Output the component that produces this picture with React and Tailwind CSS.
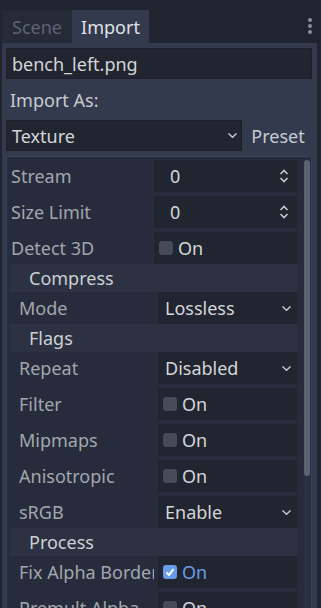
import { Fragment } from "react";

const FIELD = "bg-[#21252f] h-[32px] flex items-center relative";

function SpinArrows() {
  return (
    <svg width="10" height="16" viewBox="0 0 10 16" className="absolute right-[8px]">
      <path d="M1.5 6 L5 2.5 L8.5 6" fill="none" stroke="#c4c7cd" strokeWidth="1.6" />
      <path d="M1.5 10 L5 13.5 L8.5 10" fill="none" stroke="#c4c7cd" strokeWidth="1.6" />
    </svg>
  );
}

function Chevron({ right = "right-[5px]" }) {
  return (
    <svg width="11" height="7" viewBox="0 0 11 7" className={`absolute ${right}`}>
      <path d="M1.5 1.5 L5.5 5.2 L9.5 1.5" fill="none" stroke="#c4c7cd" strokeWidth="1.5" />
    </svg>
  );
}

function CheckBox({ checked }) {
  if (checked) {
    return (
      <span className="w-[14px] h-[14px] rounded-[3px] bg-[#699ce8] flex items-center justify-center">
        <svg width="10" height="10" viewBox="0 0 10 10">
          <path d="M1.5 5.5 L4 8 L8.5 2" fill="none" stroke="#fff" strokeWidth="2" />
        </svg>
      </span>
    );
  }
  return <span className="w-[14px] h-[14px] rounded-[3px] bg-[#464b57]" />;
}

function Value({ prop }) {
  if (prop.type === "spin") {
    return (
      <>
        <span className="pl-[16px] text-[#d4d6da]">{prop.value}</span>
        <SpinArrows />
      </>
    );
  }
  if (prop.type === "enum") {
    return (
      <>
        <span className="pl-[7px] text-[#d4d6da]">{prop.value}</span>
        <Chevron />
      </>
    );
  }
  return (
    <span className="pl-[5px] flex items-center">
      <CheckBox checked={prop.checked} />
      <span className={`pl-[5px] ${prop.checked ? "text-[#699ce8]" : "text-[#d4d6da]"}`}>On</span>
    </span>
  );
}

function Row({ prop, sub, first }) {
  return (
    <div className={`flex items-center ${first ? "" : "mt-[4px]"} ${sub ? "pl-[3px]" : ""}`}>
      <div
        className={`flex-1 min-w-0 mr-[4px] whitespace-nowrap overflow-hidden text-[#a3a6ad] ${
          sub ? "pl-[9px]" : "pl-[4px]"
        }`}
      >
        {prop.label}
      </div>
      <div className={`${FIELD} ${sub ? "w-[139px]" : "w-[143px]"}`}>
        <Value prop={prop} />
      </div>
    </div>
  );
}

function Header({ title }) {
  return (
    <div className="ml-[3px] h-[28px] bg-[#2c3242] flex items-center pl-[19px] text-[#cdd0d5]">
      {title}
    </div>
  );
}

const topProps = [
  { label: "Stream", type: "spin", value: "0" },
  { label: "Size Limit", type: "spin", value: "0" },
  { label: "Detect 3D", type: "check" },
];

const sections = [
  { title: "Compress", props: [{ label: "Mode", type: "enum", value: "Lossless" }] },
  {
    title: "Flags",
    props: [
      { label: "Repeat", type: "enum", value: "Disabled" },
      { label: "Filter", type: "check" },
      { label: "Mipmaps", type: "check" },
      { label: "Anisotropic", type: "check" },
      { label: "sRGB", type: "enum", value: "Enable" },
    ],
  },
  {
    title: "Process",
    props: [
      { label: "Fix Alpha Border", type: "check", checked: true },
      { label: "Premult Alpha", type: "check" },
    ],
  },
];

export default function App() {
  return (
    <div className="w-[321px] h-[608px] overflow-hidden bg-[#20242f] font-['Noto_Sans',sans-serif] text-[18px] leading-[24px] flex flex-col">
      {/* tabs */}
      <div className="flex items-end h-[43px] pl-[2px] shrink-0">
        <div className="w-[70px] h-[33px] bg-[#252a37] flex items-center justify-center text-[#5e6372]">
          Scene
        </div>
        <div className="w-[77px] h-[33px] bg-[#333a4d] flex items-center justify-center text-[#e0e2e6]">
          Import
        </div>
        <div className="ml-auto mr-[9px] self-start mt-[18px] flex flex-col gap-[2px]">
          <span className="w-[4px] h-[4px] rounded-full bg-[#8a8f9b]" />
          <span className="w-[4px] h-[4px] rounded-full bg-[#8a8f9b]" />
          <span className="w-[4px] h-[4px] rounded-full bg-[#8a8f9b]" />
        </div>
      </div>

      {/* panel */}
      <div className="ml-[2px] w-[315px] flex-1 bg-[#333a4d] pl-[4px] pr-[5px] pt-[5px] flex flex-col min-h-0">
        <div className="h-[31px] bg-[#21252f] border border-[#1c2029] flex items-center pl-[5px] text-[#d3d5da] shrink-0">
          bench_left.png
        </div>
        <div className="h-[41px] flex items-center pl-[4px] text-[#c8cbd1] shrink-0">Import As:</div>
        <div className="flex items-center h-[31px] shrink-0">
          <div className="w-[236px] h-[31px] bg-[#21252f] border border-[#1c2029] flex items-center pl-[5px] text-[#d3d5da] relative">
            Texture
            <Chevron right="right-[3px]" />
          </div>
          <div className="flex-1 text-center text-[#c8cbd1] pl-[2px]">Preset</div>
        </div>

        {/* inspector */}
        <div className="mt-[5px] flex-1 bg-[#262c3b] border border-[#3a4256] border-b-0 flex min-h-0">
          <div className="w-[290px] pt-[3px]">
            {topProps.map((p, i) => (
              <Row key={p.label} prop={p} first={i === 0} />
            ))}
            {sections.map((s) => (
              <Fragment key={s.title}>
                <Header title={s.title} />
                {s.props.map((p, i) => (
                  <Row key={p.label} prop={p} sub first={i === 0} />
                ))}
              </Fragment>
            ))}
          </div>
          <div className="ml-[7px] mt-[3px] w-[6px] rounded-full bg-[#2a3041] flex flex-col">
            <div className="h-[316px] rounded-full bg-[#5d6373]" />
          </div>
        </div>
      </div>
    </div>
  );
}
